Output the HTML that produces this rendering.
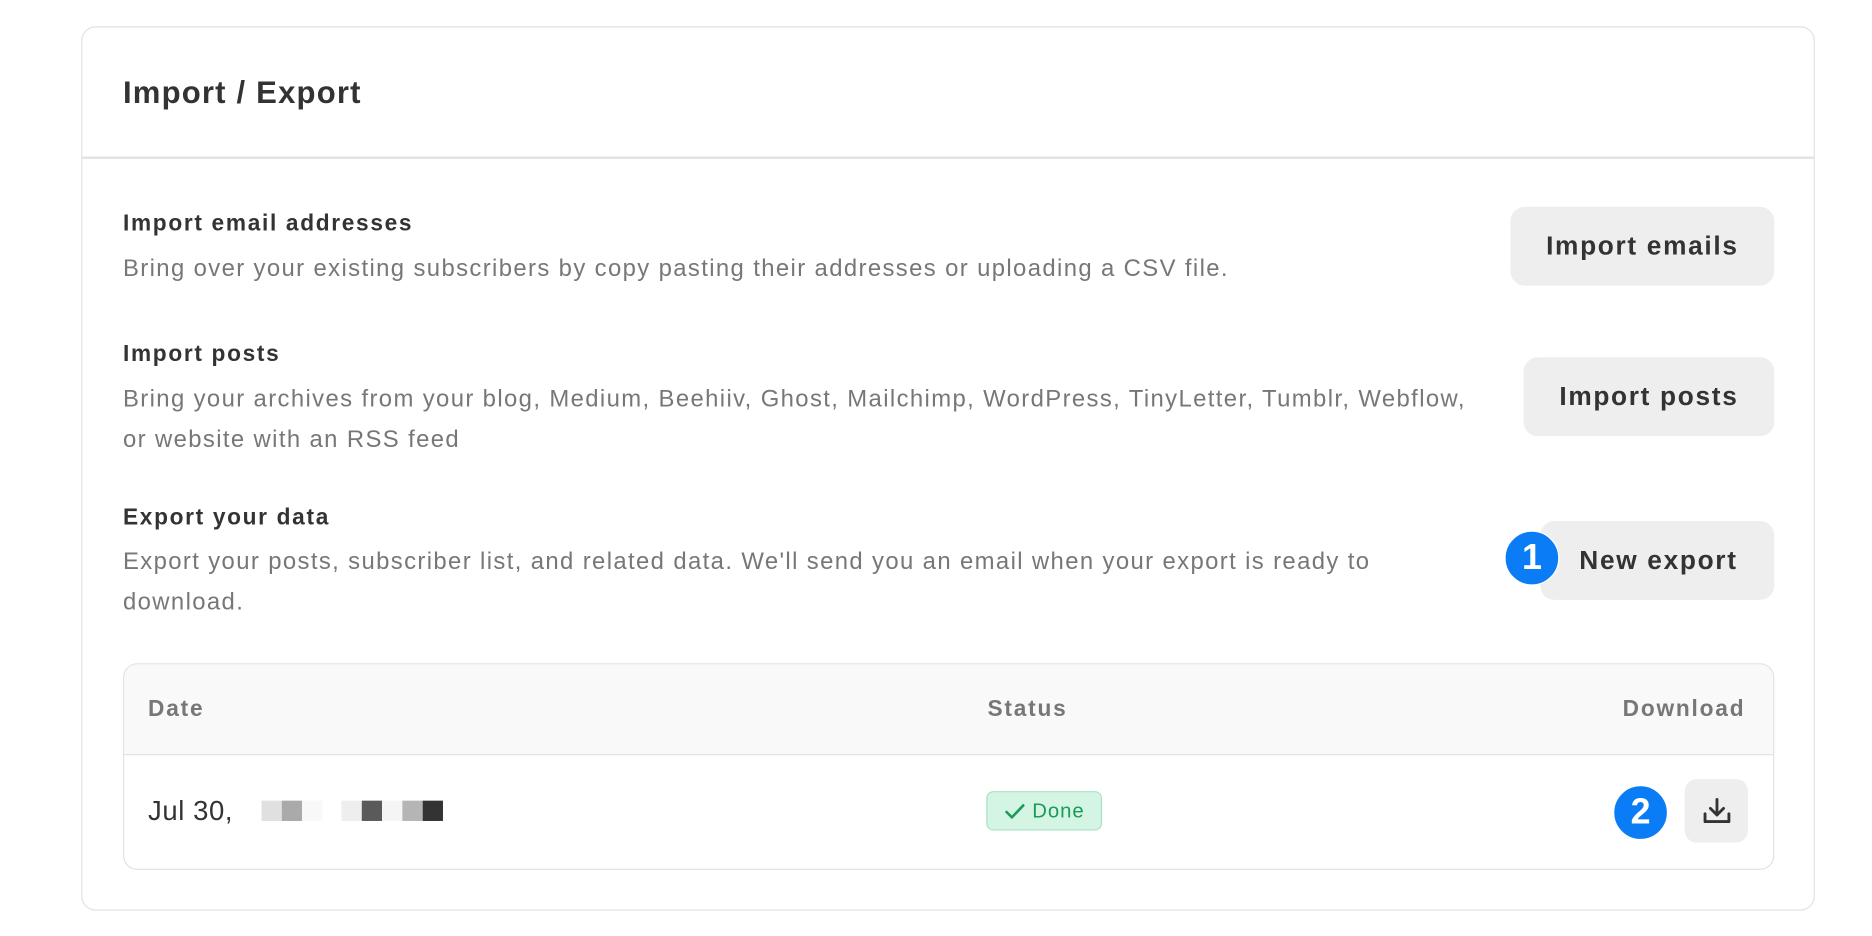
<!DOCTYPE html>
<html><head><meta charset="utf-8"><style>
html,body{margin:0;padding:0;background:#fff;}
body{width:1872px;height:936px;overflow:hidden;}
#w{width:1560px;height:780px;transform:scale(1.194,1.195);transform-origin:0 0;position:relative;font-family:"Liberation Sans",Arial,sans-serif;color:#333;}
.a{position:absolute;white-space:nowrap;}
.card{left:68px;top:22px;width:1452px;height:740px;border:1.5px solid #e2e2e2;border-radius:12px;box-sizing:border-box;}
.div{left:69px;top:131px;width:1450px;height:1.5px;background:#e2e2e2;}
.h{font-weight:bold;font-size:26px;color:#333;left:103px;top:62px;letter-spacing:1px;}
.t{font-weight:bold;font-size:19px;color:#333;left:103px;letter-spacing:1.4px;}
.d{font-size:20px;color:#777;left:103px;line-height:34px;width:1150px;letter-spacing:1.15px;white-space:normal;}
.btn{background:#eeeeee;border-radius:12px;font-weight:bold;font-size:22px;color:#333;display:flex;align-items:center;justify-content:center;letter-spacing:1.4px;}
.badge{width:46px;height:46px;border-radius:50%;background:#0a7cf5;color:#fff;font-weight:bold;font-size:30px;display:flex;align-items:center;justify-content:center;border:1.5px solid #fff;box-sizing:border-box;}
.tbl{left:103px;top:555px;width:1383px;height:173px;border:1.5px solid #e2e2e2;border-radius:12px;box-sizing:border-box;overflow:hidden;}
.th{font-weight:bold;font-size:19px;color:#777;top:583px;letter-spacing:1.5px;}
.px{top:670px;height:17px;width:17px;}
</style></head><body><div id="w">
<div class="a card"></div>
<div class="a h">Import / Export</div>
<div class="a div"></div>

<div class="a t" style="top:177px">Import email addresses</div>
<div class="a d" style="top:208px">Bring over your existing subscribers by copy pasting their addresses or uploading a CSV file.</div>
<div class="a btn" style="left:1265px;top:173px;width:221px;height:66px">Import emails</div>

<div class="a t" style="top:286px">Import posts</div>
<div class="a d" style="top:317px;width:1145px">Bring your archives from your blog, Medium, Beehiiv, Ghost, Mailchimp, WordPress, TinyLetter, Tumblr, Webflow, or website with an RSS feed</div>
<div class="a btn" style="left:1276px;top:299px;width:210px;height:66px">Import posts</div>

<div class="a t" style="top:423px">Export your data</div>
<div class="a d" style="top:453px;width:1080px">Export your posts, subscriber list, and related data. We'll send you an email when your export is ready to download.</div>
<div class="a btn" style="left:1290px;top:436px;width:196px;height:66px;padding-left:2px;box-sizing:border-box">New export</div>
<div class="a badge" style="left:1260px;top:444px">1</div>

<div class="a tbl"><div style="height:75px;background:#f9f9f9;border-bottom:1.5px solid #e2e2e2"></div></div>
<div class="a th" style="left:124px">Date</div>
<div class="a th" style="left:827px">Status</div>
<div class="a th" style="left:1359px">Download</div>

<div class="a" style="left:124px;top:665px;font-size:23px;color:#333;letter-spacing:0.5px">Jul 30,</div>
<div class="a px" style="left:219px;background:#e0e0e0"></div>
<div class="a px" style="left:236px;background:#aaa"></div>
<div class="a px" style="left:253px;background:#f8f8f8"></div>
<div class="a px" style="left:286px;background:#eee"></div>
<div class="a px" style="left:303px;background:#5a5a5a"></div>
<div class="a px" style="left:320px;background:#f5f5f5"></div>
<div class="a px" style="left:337px;background:#b5b5b5"></div>
<div class="a px" style="left:354px;background:#333"></div>

<div class="a" style="left:826px;top:662px;width:97px;height:33px;box-sizing:border-box;background:#d4f5e4;border:1.5px solid #a8e2c4;border-radius:6px;color:#1c9a5a;font-size:17px;display:flex;align-items:center;justify-content:center;gap:6px;letter-spacing:0.8px">
<svg width="18" height="16" viewBox="0 0 18 16"><path d="M2 8.5 L6.5 13 L16 3" fill="none" stroke="#1c9a5a" stroke-width="2.2" stroke-linecap="round" stroke-linejoin="round"/></svg>Done</div>

<div class="a badge" style="left:1351px;top:657px">2</div>
<div class="a" style="left:1411px;top:652px;width:53px;height:53px;background:#eee;border-radius:10px;display:flex;align-items:center;justify-content:center">
<svg width="26" height="26" viewBox="0 0 26 26"><path d="M13 3 V16 M7.5 10.5 L13 16 L18.5 10.5 M3 15 V21.5 H23 V15" fill="none" stroke="#333" stroke-width="2.4" stroke-linecap="round" stroke-linejoin="round"/></svg></div>
</div></body></html>
